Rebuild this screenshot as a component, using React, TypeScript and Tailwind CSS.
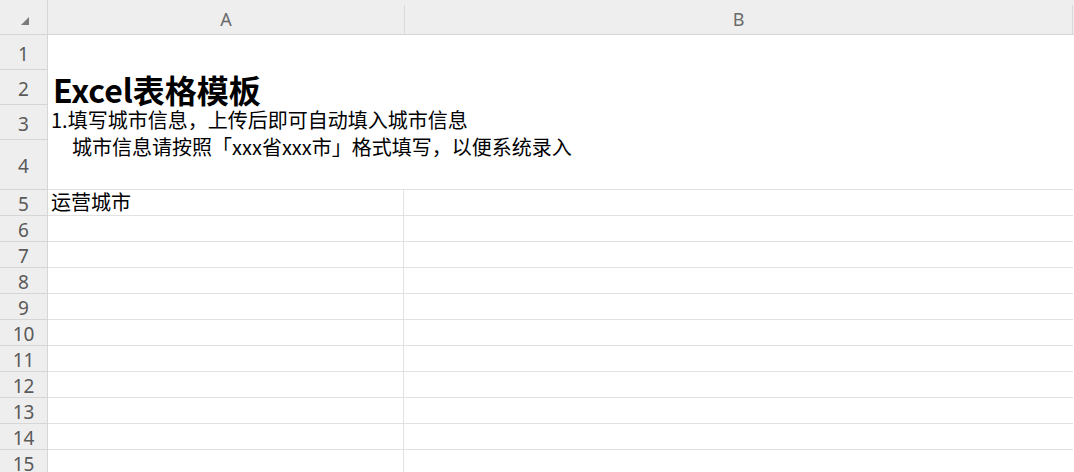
import React from 'react';

const cjk = { fontFamily: '"Noto Sans CJK SC", "Noto Sans", sans-serif' };
const label = { fontFamily: '"Noto Sans", "Liberation Sans", sans-serif' };

// row number -> height in px, bottom gridline included
const rows: [number, number][] = [
  [1, 35], [2, 35], [3, 35], [4, 50], [5, 26], [6, 26], [7, 26], [8, 26],
  [9, 26], [10, 26], [11, 26], [12, 26], [13, 26], [14, 26], [15, 26],
];

const RowHeader: React.FC<{ n: number; h: number }> = ({ n, h }) => (
  <div
    style={{ height: h }}
    className="flex items-center justify-center border-b border-r border-[#d6d6d6] bg-[#eeeeee] pt-1 text-[19px] text-[#5a5a5a]"
  >
    <span style={label}>{n}</span>
  </div>
);

export default function App() {
  return (
    <div className="h-[472px] w-[1074px] overflow-hidden bg-white" style={cjk}>
      {/* column header strip */}
      <div className="flex h-[35px] border-b border-[#d6d6d6] bg-[#eeeeee]">
        <div className="relative w-[48px] border-r border-[#d6d6d6]">
          <svg className="absolute left-[20px] top-[16px]" width="10" height="10" viewBox="0 0 10 10">
            <polygon points="9,1 9,9 1,9" fill="#7a7a7a" />
          </svg>
        </div>
        <div className="flex w-[356px] items-center justify-center pt-1 text-[18px] text-[#6a6a6a]">
          <span style={label}>A</span>
        </div>
        <div className="mt-[5px] w-px bg-[#d9d9d9]" />
        <div className="flex w-[667px] items-center justify-center pt-1 text-[18px] text-[#6a6a6a]">
          <span style={label}>B</span>
        </div>
        <div className="mt-[5px] w-px bg-[#d9d9d9]" />
      </div>

      <div className="flex">
        {/* row numbers */}
        <div className="flex w-[48px] flex-col">
          {rows.map(([n, h]) => (
            <RowHeader key={n} n={n} h={h} />
          ))}
        </div>

        {/* cells */}
        <div className="flex w-[1025px] flex-col">
          {/* merged A1:B4 */}
          <div className="flex h-[155px] flex-col border-b border-[#e2e2e2] pl-[5px] pt-[37px] text-black">
            <div className="text-[32px] font-bold leading-[34px]">Excel表格模板</div>
            <div className="-ml-[2px] text-[20px] leading-[27px]">1.填写城市信息，上传后即可自动填入城市信息</div>
            <div className="pl-[19px] text-[20px] leading-[27px]">城市信息请按照「xxx省xxx市」格式填写，以便系统录入</div>
          </div>
          {rows.slice(4).map(([n, h]) => (
            <div key={n} style={{ height: h }} className="flex border-b border-[#e2e2e2]">
              <div className="flex w-[356px] items-end border-r border-[#e2e2e2] pb-[1px] pl-[3px] text-[20px] leading-[24px] text-black">
                {n === 5 ? '运营城市' : ''}
              </div>
              <div className="w-[669px]" />
            </div>
          ))}
        </div>
      </div>
    </div>
  );
}
